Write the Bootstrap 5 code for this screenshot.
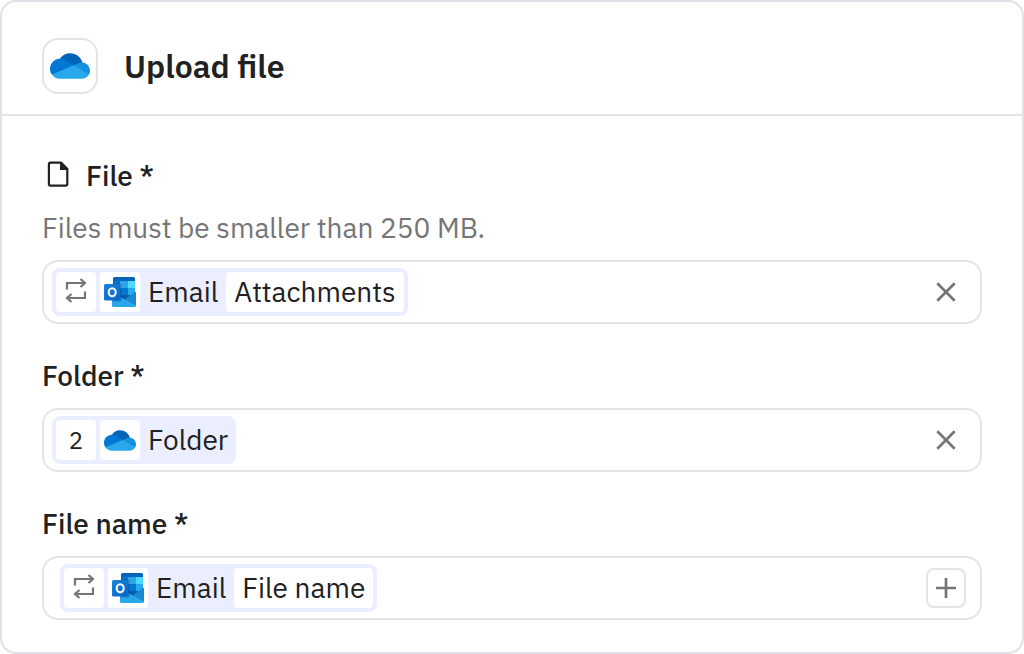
<!DOCTYPE html>
<html lang="en">
<head>
<meta charset="utf-8">
<meta name="viewport" content="width=device-width, initial-scale=1">
<title>Upload file</title>
<link href="https://cdn.jsdelivr.net/npm/bootstrap@5.3.0/dist/css/bootstrap.min.css" rel="stylesheet">
<style>
  body { font-family: "IBM Plex Sans", Roboto, sans-serif; font-size: 28px; line-height: 32px; color: #212121; background: #fff; }
  .step { border: 2px solid #e1e0e9; border-radius: 16px; }
  .step-head { border-bottom: 2px solid #e4e4e4; padding: 36px 40px 20px; gap: 26px; }
  .step-head h1 { font-size: 32px; line-height: 40px; font-weight: 600; }
  .app-tile { width: 56px; height: 56px; border: 2px solid #e4e4e4; border-radius: 16px; }
  .step-body { padding: 44px 40px 32px; gap: 36px; }
  .field-label { font-weight: 500; gap: 12px; }
  .hint { color: #757575; margin-top: 20px; }
  .field-box { height: 64px; margin-top: 16px; padding: 0 14px 0 8px; border: 2px solid #e4e4e4; border-radius: 16px; }
  .field-box.roomy { padding-left: 16px; }
  .field-box input { outline: 0; min-width: 0; }
  .field-box:focus-within { border-color: #8a94f0; }
  .token { height: 48px; padding: 4px; gap: 4px; background: #ebeeff; border-radius: 8px; }
  .cell { height: 40px; min-width: 40px; background: #fff; border-radius: 4px; }
  .step-no { font-size: 24px; }
  .token-text { padding: 0 4px; }
  .cell-text { padding: 0 8px; }
  .icon-btn { width: 40px; height: 40px; color: #757575; background: none; border: 0; }
  .icon-btn.framed { border: 2px solid #e4e4e4; border-radius: 8px; }
  svg { display: block; flex: none; }
</style>
</head>
<body>
<svg width="0" height="0" class="position-absolute" aria-hidden="true">
  <defs>
    <linearGradient id="ol-flap" x1="0" y1="0" x2="0" y2="1"><stop offset="0" stop-color="#35b8f1"/><stop offset="1" stop-color="#28a8ea"/></linearGradient>
    <linearGradient id="ol-tile" x1="0" y1="0" x2="1" y2="1"><stop offset="0" stop-color="#1784d9"/><stop offset="1" stop-color="#0a63c9"/></linearGradient>
  </defs>
  <symbol id="onedrive" viewBox="0 0 1030 660">
    <path fill="#0364b8" d="M622.300 445.300l212.600-203.300C790.700 69.800 615.300-34 443.100 10.200 365.600 30 298.200 78.100 254.200 145z"/>
    <path fill="#0078d4" d="M392.800 183.300c-40.600-25.200-87.500-38.500-135.300-38.400l-3.300.1C112 146.800-1.700 263.400 0 405.600c.6 51.500 16.700 101.700 46.200 144l318.600-39.900L609 312.800z"/>
    <path fill="#1490df" d="M834.900 242c-33.400-2.300-66.400 3.300-97 16.600L609 312.800l142 175.500L1005 550c54.800-101.700 16.700-228.600-85-283.400-26.300-14.200-55.300-22.600-85.100-24.600z"/>
    <path fill="#28a8ea" d="M46.300 549.600c48.100 69.200 127 110.400 211.200 110.300h563.300c76.900 0 147.700-42.200 184.200-109.900L609 312.800z"/>
  </symbol>
  <symbol id="outlook" viewBox="0 0 32 30">
    <path fill="#0364b8" d="M10.500 0h19a1.500 1.500 0 0 1 1.500 1.500V5H9V1.500A1.500 1.500 0 0 1 10.500 0z"/>
    <path fill="#0a5ea9" d="M9 11h22v5l-8 8H9z"/>
    <path fill="#0078d4" d="M9 4h7.500v7H9z"/>
    <path fill="#28a8ea" d="M16.500 4H24v7h-7.500z"/>
    <path fill="#50d9ff" d="M24 4h7v7h-7z"/>
    <path fill="#0364b8" d="M9 11h7.500v7H9z"/>
    <path fill="#0078d4" d="M16.500 11H24v7h-7.500z"/>
    <path fill="#28a8ea" d="M24 11h7v5l-3 2h-4z"/>
    <path fill="#28a8ea" d="M8 16 21 22.500 32 26v2.500a1.500 1.500 0 0 1-1.500 1.500h-21A1.500 1.500 0 0 1 8 28.500z"/>
    <path fill="#1b86d1" d="M32 14.500v13.700L20.500 22.300z"/>
    <path fill="#003a70" opacity=".3" d="M9 6h7a1.500 1.500 0 0 1 1.500 1.500V23a1.500 1.500 0 0 1-1.500 1.500H8V20z"/>
    <rect y="7" width="16.500" height="16.500" rx="1.500" fill="url(#ol-tile)"/>
    <ellipse cx="8.200" cy="15.200" rx="3.500" ry="4" fill="none" stroke="#fff" stroke-width="2"/>
  </symbol>
  <symbol id="loop" viewBox="0 0 24 28">
    <path fill="none" stroke="#757575" stroke-width="2.200" d="M3 11.500V5h18M16.500 1l4.500 4-4.500 4M21 13.500V20H3M7.500 16 3 20l4.500 4"/>
  </symbol>
  <symbol id="cross" viewBox="0 0 20 20">
    <path fill="none" stroke="currentColor" stroke-width="2.700" d="m1.300 1.300 17.400 17.400M18.700 1.300 1.300 18.700"/>
  </symbol>
</svg>

<main class="step d-flex flex-column min-vh-100">
  <header class="step-head d-flex align-items-center">
    <span class="app-tile d-flex align-items-center justify-content-center"><svg width="40" height="26" role="img" aria-label="OneDrive"><use href="#onedrive"/></svg></span>
    <h1 class="m-0">Upload file</h1>
  </header>
  <form class="step-body d-flex flex-column">
    <div>
      <label class="field-label d-flex align-items-center" for="file">
        <svg width="32" height="32" viewBox="0 0 32 32" aria-hidden="true"><path d="M8 2.600h11l6.300 6.300V24a1.600 1.600 0 0 1-1.600 1.600H8.500A1.600 1.600 0 0 1 6.900 24V4.200A1.600 1.600 0 0 1 8.500 2.600z" fill="none" stroke="#212121" stroke-width="2.200"/><path d="M18 2h1.500l6.500 6.500V10h-8z" fill="#212121"/></svg>
        File *
      </label>
      <div class="hint" id="file-hint">Files must be smaller than 250 MB.</div>
      <div class="field-box d-flex align-items-center">
        <span class="token d-flex align-items-center">
          <span class="cell d-flex align-items-center justify-content-center"><svg width="24" height="28"><use href="#loop"/></svg></span>
          <span class="cell d-flex align-items-center justify-content-center"><svg width="32" height="30"><use href="#outlook"/></svg></span>
          <span class="token-text">Email</span>
          <span class="cell cell-text d-flex align-items-center">Attachments</span>
        </span>
        <input class="flex-grow-1 border-0 bg-transparent" type="text" id="file" aria-describedby="file-hint">
        <button class="icon-btn d-flex align-items-center justify-content-center p-0" type="button" aria-label="Clear file"><svg width="20" height="20"><use href="#cross"/></svg></button>
      </div>
    </div>
    <div>
      <label class="field-label d-block" for="folder">Folder *</label>
      <div class="field-box d-flex align-items-center">
        <span class="token d-flex align-items-center">
          <span class="cell step-no d-flex align-items-center justify-content-center">2</span>
          <span class="cell d-flex align-items-center justify-content-center"><svg width="32" height="21"><use href="#onedrive"/></svg></span>
          <span class="token-text">Folder</span>
        </span>
        <input class="flex-grow-1 border-0 bg-transparent" type="text" id="folder">
        <button class="icon-btn d-flex align-items-center justify-content-center p-0" type="button" aria-label="Clear folder"><svg width="20" height="20"><use href="#cross"/></svg></button>
      </div>
    </div>
    <div>
      <label class="field-label d-block" for="name">File name *</label>
      <div class="field-box roomy d-flex align-items-center">
        <span class="token d-flex align-items-center">
          <span class="cell d-flex align-items-center justify-content-center"><svg width="24" height="28"><use href="#loop"/></svg></span>
          <span class="cell d-flex align-items-center justify-content-center"><svg width="32" height="30"><use href="#outlook"/></svg></span>
          <span class="token-text">Email</span>
          <span class="cell cell-text d-flex align-items-center">File name</span>
        </span>
        <input class="flex-grow-1 border-0 bg-transparent" type="text" id="name">
        <button class="icon-btn framed d-flex align-items-center justify-content-center p-0" type="button" aria-label="Insert data"><svg width="20" height="20" viewBox="0 0 20 20"><path d="M10 0v20M0 10h20" fill="none" stroke="currentColor" stroke-width="2.700"/></svg></button>
      </div>
    </div>
  </form>
</main>
<script src="https://cdn.jsdelivr.net/npm/bootstrap@5.3.0/dist/js/bootstrap.bundle.min.js"></script>
</body>
</html>
